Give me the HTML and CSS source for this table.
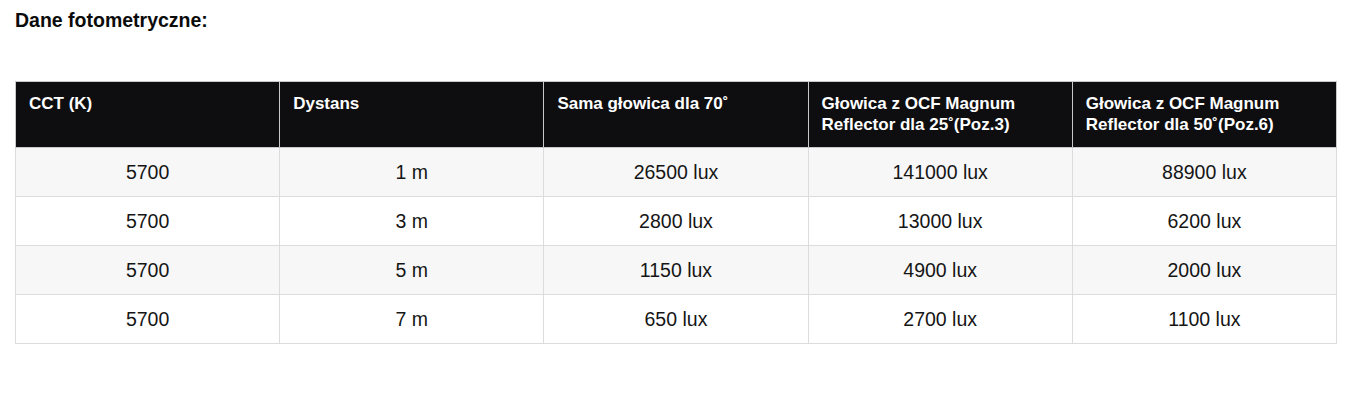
FILE: index.html
```html
<!DOCTYPE html>
<html lang="pl">
<head>
<meta charset="utf-8">
<link rel="stylesheet" href="styles.css">
</head>
<body>
<div class="page">
  <h3 class="title">Dane fotometryczne:</h3>
  <table class="data">
    <thead>
      <tr>
        <th>CCT (K)</th>
        <th>Dystans</th>
        <th>Sama głowica dla 70˚</th>
        <th>Głowica z OCF Magnum Reflector dla 25˚(Poz.3)</th>
        <th>Głowica z OCF Magnum Reflector dla 50˚(Poz.6)</th>
      </tr>
    </thead>
    <tbody>
      <tr><td>5700</td><td>1 m</td><td>26500 lux</td><td>141000 lux</td><td>88900 lux</td></tr>
      <tr><td>5700</td><td>3 m</td><td>2800 lux</td><td>13000 lux</td><td>6200 lux</td></tr>
      <tr><td>5700</td><td>5 m</td><td>1150 lux</td><td>4900 lux</td><td>2000 lux</td></tr>
      <tr><td>5700</td><td>7 m</td><td>650 lux</td><td>2700 lux</td><td>1100 lux</td></tr>
    </tbody>
  </table>
</div>
</body>
</html>
```

FILE: styles.css
```css
html, body {
  margin: 0;
  padding: 0;
  background: #ffffff;
}
body {
  font-family: "Liberation Sans", Arial, sans-serif;
  color: #111;
}
.page {
  padding: 9px 13px 0 15px;
}
.title {
  margin: 0;
  font-size: 19.5px;
  line-height: 22px;
  font-weight: bold;
  color: #0b0b0b;
}
.data {
  margin-top: 50px;
  width: 1322px;
  border-collapse: collapse;
  table-layout: fixed;
}
.data th {
  background: #0e0e10;
  color: #ffffff;
  font-size: 17px;
  font-weight: bold;
  text-align: left;
  vertical-align: top;
  line-height: 21px;
  padding: 11px 14px 0 13px;
  height: 54px;
  border: 1px solid #c9c9c9;
}
.data td {
  font-size: 19.5px;
  text-align: center;
  height: 48px;
  padding: 0;
  border: 1px solid #dcdcdc;
  color: #151515;
}
.data tbody tr:nth-child(odd) td {
  background: #f7f7f7;
}
.data tbody tr:nth-child(even) td {
  background: #ffffff;
}
```
